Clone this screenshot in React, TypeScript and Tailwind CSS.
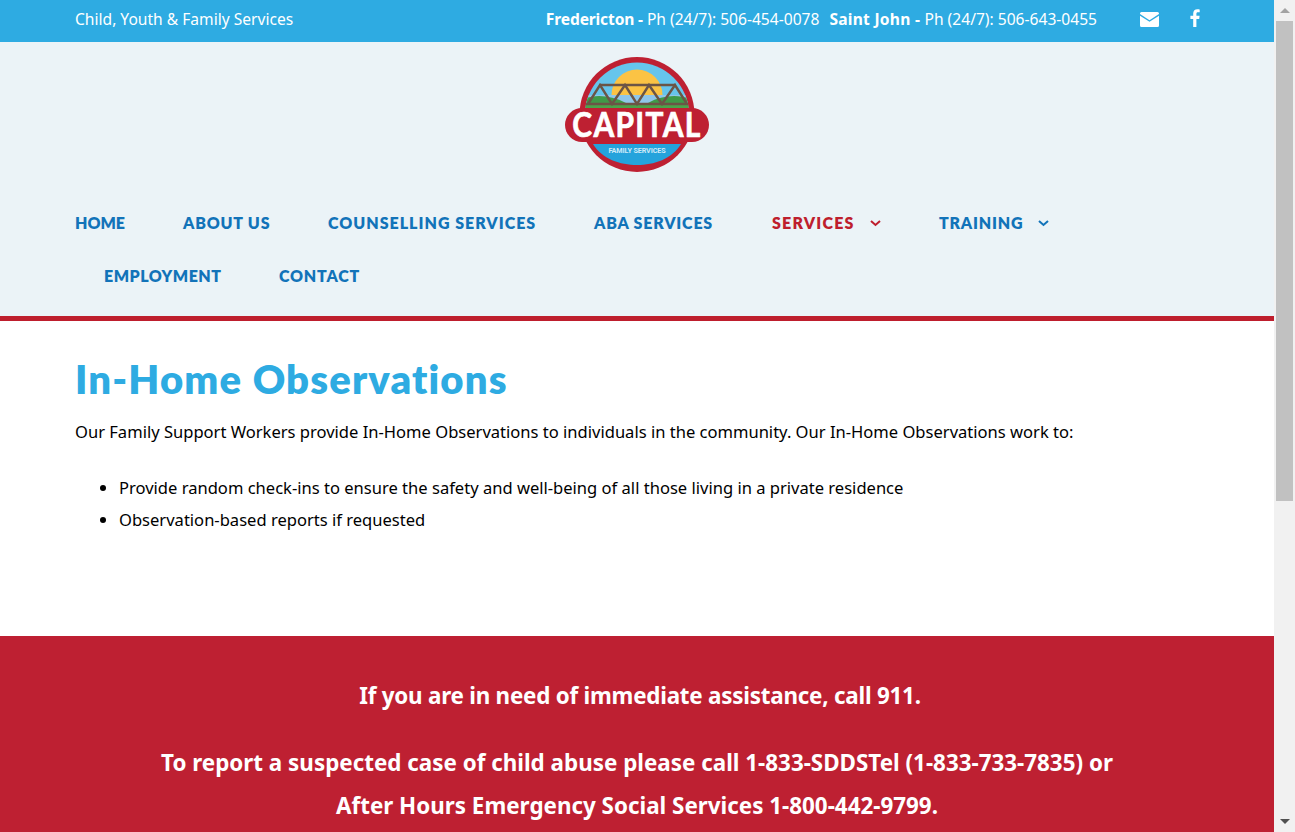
import React from "react";

const navBlue = "text-[#1273b9]";

const Chevron = () => (
  <svg width="11" height="7" viewBox="0 0 11 7" fill="none" stroke="currentColor" strokeWidth="2" className="ml-[16px] mt-[1px]">
    <path d="M1 1l4.500 4 4.500-4" />
  </svg>
);

const Logo = () => (
  <svg width="146" height="118" viewBox="0 0 146 118">
    <defs>
      <clipPath id="disc">
        <circle cx="73" cy="58.500" r="52" />
      </clipPath>
    </defs>
    <circle cx="73" cy="58.500" r="57.500" fill="#be2032" />
    <g clipPath="url(#disc)">
      <rect x="0" y="0" width="146" height="60" fill="#66c5ec" />
      <circle cx="73" cy="39" r="25.500" fill="#fbc344" />
      <rect x="15" y="39" width="116" height="10" fill="#8fc6ea" />
      <path d="M15 46 C26 38 44 38 62 47 H15Z" fill="#3f9a48" />
      <path d="M84 47 C100 38 120 38 131 46 V47Z" fill="#3f9a48" />
      <rect x="15" y="47" width="116" height="6" fill="#4ca34a" />
      <g stroke="#6b5546" strokeWidth="2.400" fill="none">
        <path d="M36 29H61L85 29H111" />
        <path d="M22 48H125" />
        <path d="M24 48L36 29L48 48L61 29L73 48L85 29L98 48L111 29L123 48" />
      </g>
    </g>
    <rect x="1" y="52" width="144" height="34" rx="17" fill="#be2032" />
    <text transform="translate(73 81) scale(0.88 1)" textAnchor="middle" fill="#ffffff" stroke="#ffffff" strokeWidth="0.7" fontFamily="Lato, sans-serif" fontWeight="700" fontSize="34" letterSpacing="1.500">
      CAPITAL
    </text>
    <path d="M29 88H117C108 103 90 109 73 109C56 109 38 103 29 88Z" fill="#24a3dc" />
    <text x="73" y="97" textAnchor="middle" fill="#cfeaf7" fontFamily="Roboto, sans-serif" fontWeight="700" fontSize="7.200" letterSpacing="-0.1">
      FAMILY SERVICES
    </text>
  </svg>
);

const Scrollbar = () => (
  <div className="flex h-[832px] w-[21px] shrink-0 flex-col items-center bg-[#f1f1f1]">
    <div className="flex h-[21px] w-full items-center justify-center">
      <div className="h-0 w-0 border-x-[5px] border-b-[5px] border-x-transparent border-b-[#a3a3a3]" />
    </div>
    <div className="h-[480px] w-[17px] bg-[#c1c1c1]" />
    <div className="flex-1" />
    <div className="flex h-[21px] w-full items-center justify-center">
      <div className="h-0 w-0 border-x-[5px] border-t-[5px] border-x-transparent border-t-[#505050]" />
    </div>
  </div>
);

export default function App() {
  return (
    <div className="flex h-[832px] overflow-hidden bg-white font-['Noto_Sans',sans-serif] text-[16.56px] text-black">
      <div className="w-[1274px] shrink-0">
        <div className="flex h-[42px] items-center bg-[#2eabe2] pb-[2px] pl-[75px] text-[15.6px] text-white">
          <span>Child, Youth &amp; Family Services</span>
          <div className="ml-auto flex items-center">
            <span><b className="tracking-[-0.15px]">Fredericton - </b>Ph (24/7): 506-454-0078</span>
            <span className="ml-[10px]"><b className="tracking-[0.25px]">Saint John - </b>Ph (24/7): 506-643-0455</span>
            <svg width="19" height="15" viewBox="0 0 19 15" className="ml-[43px]" fill="#ffffff">
              <path d="M1.500 0h16A1.500 1.500 0 0 1 19 1.500v.6L9.500 8.200 0 2.100v-.6A1.500 1.500 0 0 1 1.500 0z" />
              <path d="M0 3.800l9.500 6L19 3.800v9.700a1.500 1.500 0 0 1-1.500 1.500h-16A1.500 1.500 0 0 1 0 13.500z" />
            </svg>
            <svg width="10" height="18" viewBox="0 0 10 18" className="ml-[31px] mr-[74px] -mt-[3px]" fill="#ffffff">
              <path d="M6.400 18V10h2.800l.4-3.200H6.400V4.900c0-.9.3-1.600 1.600-1.600h1.700V.4C9.400.3 8.400.2 7.300.2 4.900.2 3.200 1.700 3.200 4.500v2.300H.4V10h2.800v8z" />
            </svg>
          </div>
        </div>

        <div className="border-b-[5px] border-[#be1e2d] bg-[#ebf3f7]">
          <div className="flex justify-center pt-[14px]">
            <Logo />
          </div>
          <nav className="flex flex-wrap px-[75px] pt-[37px] font-['Lato',sans-serif] text-[16px] font-extrabold tracking-[0.8px]">
            <div className="flex w-full gap-[58px] whitespace-nowrap pb-[29px] leading-[24px]">
              <a className={`w-[50px] tracking-[0px] ${navBlue}`}>HOME</a>
              <a className={`w-[87px] ${navBlue}`}>ABOUT US</a>
              <a className={`w-[208px] tracking-[1px] ${navBlue}`}>COUNSELLING SERVICES</a>
              <a className={`w-[120px] ${navBlue}`}>ABA SERVICES</a>
              <a className="flex items-center text-[#be1e2d]"><span className="w-[82px] tracking-[1.2px]">SERVICES</span><Chevron /></a>
              <a className={`flex items-center ${navBlue}`}><span className="w-[83px]">TRAINING</span><Chevron /></a>
            </div>
            <div className="flex w-full gap-[58px] whitespace-nowrap pb-[28px] pl-[29px] leading-[24px]">
              <a className={`w-[117px] tracking-[0.5px] ${navBlue}`}>EMPLOYMENT</a>
              <a className={navBlue}>CONTACT</a>
            </div>
          </nav>
        </div>

        <div className="h-[315px] px-[75px] pt-[31px]">
          <h1 className="font-['Lato',sans-serif] text-[40px] font-extrabold leading-[54px] tracking-[1.15px] text-[#2eabe2]">
            In-Home Observations
          </h1>
          <p className="mt-[10px] leading-[32px]">
            Our Family Support Workers provide In-Home Observations to individuals in the community. Our In-Home Observations work to:
          </p>
          <ul className="mt-[24px] list-disc pl-[44px] leading-[32px]">
            <li>Provide random check-ins to ensure the safety and well-being of all those living in a private residence</li>
            <li>Observation-based reports if requested</li>
          </ul>
        </div>

        <div className="h-[196px] bg-[#be2032] pt-[38px] text-center text-[22.4px] font-bold leading-[43px] text-white">
          <p className="pl-[6px] tracking-[-0.23px]">If you are in need of immediate assistance, call 911.</p>
          <p className="mt-[24px]">To report a suspected case of child abuse please call 1-833-SDDSTel (1-833-733-7835) or</p>
          <p>After Hours Emergency Social Services 1-800-442-9799.</p>
        </div>
      </div>
      <Scrollbar />
    </div>
  );
}
